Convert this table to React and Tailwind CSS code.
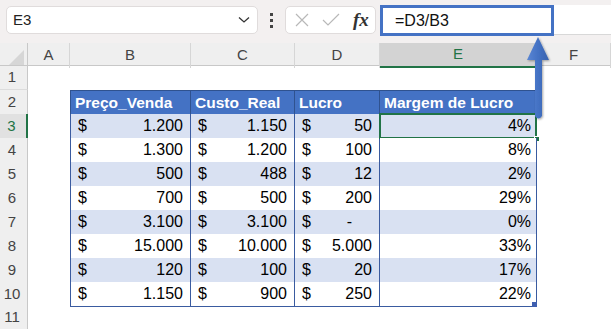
import React from 'react';

const cols = ['A', 'B', 'C', 'D', 'E', 'F'];

const data = [
  ['1.200', '1.150', '50', '4%'],
  ['1.300', '1.200', '100', '8%'],
  ['500', '488', '12', '2%'],
  ['700', '500', '200', '29%'],
  ['3.100', '3.100', '-', '0%'],
  ['15.000', '10.000', '5.000', '33%'],
  ['120', '100', '20', '17%'],
  ['1.150', '900', '250', '22%'],
];

const gridCols = 'grid grid-cols-[28px_42px_121px_104px_85px_157px_74px]';

const RowHeader = ({ n, active }) => (
  <div
    className={`flex items-center justify-center pr-[3px] text-[15px] border-b border-[#dcdcdc] ${
      active
        ? 'bg-[#e1e1e1] text-[#217346] border-r-2 border-r-[#217346]'
        : 'bg-[#efefef] text-[#444] border-r border-r-[#c8c8c8]'
    }`}
  >
    {n}
  </div>
);

const Money = ({ value, first, odd }) => (
  <div
    className={`flex items-center justify-between pl-[7px] pr-[7px] border-r border-b border-[#3a5ba0] text-[16px] text-black ${
      first ? 'border-l' : ''
    } ${odd ? 'bg-[#d9e1f2]' : 'bg-white'}`}
  >
    <span>$</span>
    <span className={value === '-' ? 'pr-[20px]' : ''}>{value}</span>
  </div>
);

const App = () => {
  return (
    <div className="w-[611px] h-[329px] overflow-hidden bg-white relative font-['Liberation_Sans',Arial,sans-serif]">
      {/* formula bar */}
      <div className="h-[43px] bg-[#f3f0f0] flex items-start pt-[5px]">
        <div className="ml-[6px] mt-[1px] w-[252px] h-[28px] bg-white border border-[#e0dcdc] rounded-[5px] flex items-center justify-between pl-[6px] pr-[7px]">
          <span className="text-[15px] text-[#222]">E3</span>
          <svg width="12" height="8" viewBox="0 0 12 8">
            <path d="M1 1.5 L6 6 L11 1.5" fill="none" stroke="#333" strokeWidth="1.3" />
          </svg>
        </div>
        <div className="w-[27px] h-[30px] flex flex-col items-center justify-center gap-[3px]">
          <span className="w-[3px] h-[3px] bg-[#444]" />
          <span className="w-[3px] h-[3px] bg-[#444]" />
          <span className="w-[3px] h-[3px] bg-[#444]" />
        </div>
        <div className="mt-[1px] w-[91px] h-[28px] bg-white border border-[#e0dcdc] rounded-[5px] flex items-center pl-[9px] gap-[13px]">
          <svg width="14" height="14" viewBox="0 0 14 14">
            <path d="M1 1 L13 13 M13 1 L1 13" stroke="#b8b8b8" strokeWidth="1.2" />
          </svg>
          <svg width="18" height="14" viewBox="0 0 18 14">
            <path d="M1 7 L6 12 L17 1" fill="none" stroke="#b8b8b8" strokeWidth="1.2" />
          </svg>
          <span className="font-['Liberation_Serif',serif] italic font-semibold text-[19px] leading-none text-[#333] -mt-[2px]">fx</span>
        </div>
        <div className="ml-[4px] flex-1 h-[30px] bg-white border-b border-[#d8d8d8] flex">
          <div className="w-[174px] h-[31px] border-[3px] border-[#4472c4] flex items-center pl-[12px]">
            <span className="text-[16px] text-[#111]">=D3/B3</span>
          </div>
        </div>
      </div>

      {/* column headers */}
      <div className={`${gridCols} h-[23px] bg-[#efefef] border-b border-[#c8c8c8]`}>
        <div className="border-r border-[#c8c8c8] flex items-end justify-end pr-[3px] pb-[3px]">
          <svg width="15" height="15" viewBox="0 0 15 15">
            <path d="M15 0 L15 15 L0 15 Z" fill="#d6d6d6" />
          </svg>
        </div>
        {cols.map((c) => (
          <div
            key={c}
            className={`flex items-center justify-center text-[15px] border-r border-[#d6d6d6] ${
              c === 'E' ? 'bg-[#d3d3d3] text-[#217346] border-b-2 border-b-[#217346]' : 'text-[#444]'
            }`}
          >
            {c}
          </div>
        ))}
      </div>

      {/* row 1 */}
      <div className={`${gridCols} h-[24px]`}>
        <RowHeader n={1} />
      </div>

      {/* table header */}
      <div className={`${gridCols} h-[24px]`}>
        <RowHeader n={2} />
        <div />
        {['Preço_Venda', 'Custo_Real', 'Lucro', 'Margem de Lucro'].map((h, i) => (
          <div
            key={h}
            className={`bg-[#4472c4] text-white font-bold text-[15.5px] flex items-center pl-[4px] border-t border-r border-b border-[#2f528f] ${
              i === 0 ? 'border-l' : ''
            }`}
          >
            {h}
          </div>
        ))}
      </div>

      {/* table body */}
      {data.map((r, i) => {
        const odd = i % 2 === 0;
        const rowNum = i + 3;
        return (
          <div key={rowNum} className={`${gridCols} h-[24px]`}>
            <RowHeader n={rowNum} active={rowNum === 3} />
            <div />
            <Money value={r[0]} first odd={odd} />
            <Money value={r[1]} odd={odd} />
            <Money value={r[2]} odd={odd} />
            <div
              className={`relative flex items-center justify-end pr-[5px] border-r border-b border-[#3a5ba0] text-[16px] text-black ${
                odd ? 'bg-[#d9e1f2]' : 'bg-white'
              }`}
            >
              {r[3]}
              {rowNum === 3 && (
                <>
                  <div className="absolute -left-[1px] -top-[1px] -right-[1px] -bottom-[1px] border-2 border-[#217346]" />
                  <div className="absolute -right-[4px] -bottom-[4px] w-[6px] h-[6px] bg-[#217346] border border-white" />
                </>
              )}
              {rowNum === 10 && (
                <div className="absolute -right-[1px] -bottom-[1px] w-[5px] h-[5px] bg-[#3f5fb0]" />
              )}
            </div>
          </div>
        );
      })}

      {/* row 11 */}
      <div className={`${gridCols} h-[24px]`}>
        <RowHeader n={11} />
      </div>

      {/* callout arrow pointing at the formula */}
      <svg className="absolute left-[518px] top-[34px]" width="42" height="92" viewBox="0 0 42 92">
        <defs>
          <linearGradient id="shaft" x1="0" x2="1" y1="0" y2="0">
            <stop offset="0" stopColor="#5a86d4" />
            <stop offset="0.5" stopColor="#4472c4" />
            <stop offset="1" stopColor="#3a63ae" />
          </linearGradient>
          <filter id="sh" x="-30%" y="-10%" width="160%" height="130%">
            <feDropShadow dx="1" dy="1" stdDeviation="1.2" floodColor="#000" floodOpacity="0.35" />
          </filter>
        </defs>
        <path
          d="M20 3 L31 26 L24 26 L24 82 Q20.5 87 17 82 L17 26 L9 26 Z"
          fill="url(#shaft)"
          filter="url(#sh)"
        />
      </svg>
    </div>
  );
};

export default App;
